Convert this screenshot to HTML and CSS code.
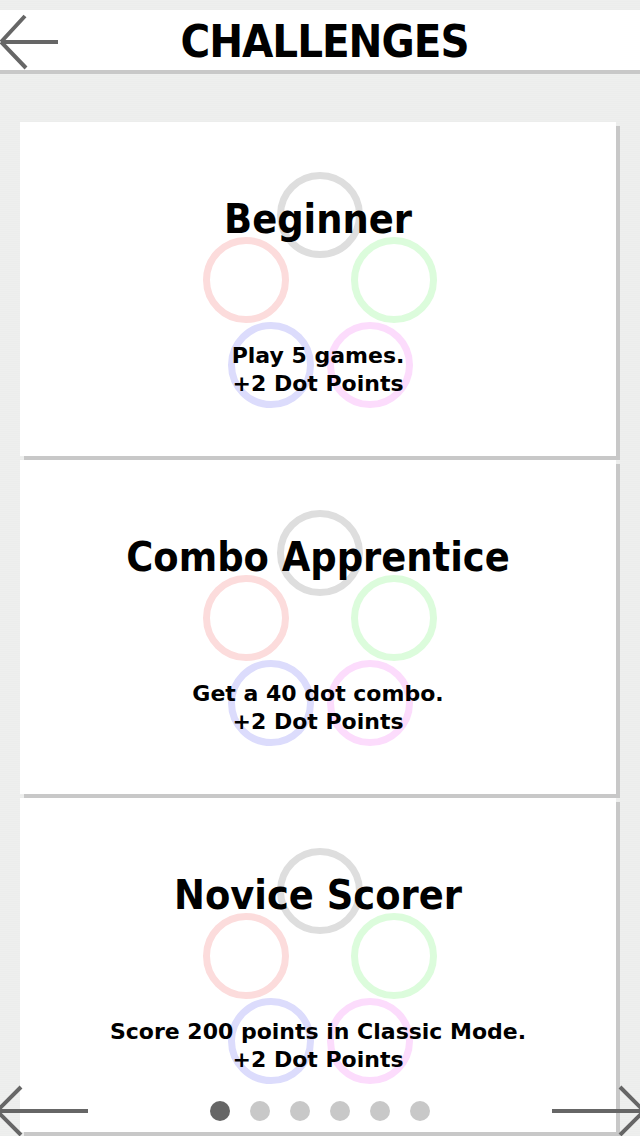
FILE: index.html
```
<!DOCTYPE html>
<html>
<head>
<meta charset="utf-8">
<link rel="stylesheet" href="styles.css">
</head>
<body>
<div class="screen">
  <header class="topbar">
    <svg class="back" width="60" height="60" viewBox="0 0 60 60"><path d="M1 32 L25 6 M1 32 L26 58 M1 32 H58" fill="none" stroke="#666" stroke-width="4"/></svg>
    <h1 class="title">CHALLENGES</h1>
  </header>
  <main class="list">
    <section class="card">
      <div class="rings"><span class="ring r-gray"></span><span class="ring r-red"></span><span class="ring r-green"></span><span class="ring r-blue"></span><span class="ring r-pink"></span></div>
      <h2 class="name">Beginner</h2>
      <p class="desc">Play 5 games.<br>+2 Dot Points</p>
    </section>
    <section class="card">
      <div class="rings"><span class="ring r-gray"></span><span class="ring r-red"></span><span class="ring r-green"></span><span class="ring r-blue"></span><span class="ring r-pink"></span></div>
      <h2 class="name">Combo Apprentice</h2>
      <p class="desc">Get a 40 dot combo.<br>+2 Dot Points</p>
    </section>
    <section class="card">
      <div class="rings"><span class="ring r-gray"></span><span class="ring r-red"></span><span class="ring r-green"></span><span class="ring r-blue"></span><span class="ring r-pink"></span></div>
      <h2 class="name">Novice Scorer</h2>
      <p class="desc">Score 200 points in Classic Mode.<br>+2 Dot Points</p>
    </section>
  </main>
  <nav class="pager">
    <svg class="arrow arrow-left" width="92" height="52" viewBox="-4 0 92 52"><path d="M-3 26 L21 2 M-3 26 L21 50 M-3 26 H88" fill="none" stroke="#666" stroke-width="4"/></svg>
    <div class="dots"><span class="dot on"></span><span class="dot"></span><span class="dot"></span><span class="dot"></span><span class="dot"></span><span class="dot"></span></div>
    <svg class="arrow arrow-right" width="92" height="52" viewBox="0 0 92 52"><path d="M92 26 L68 2 M92 26 L68 50 M92 26 H0" fill="none" stroke="#666" stroke-width="4"/></svg>
  </nav>
</div>
</body>
</html>
```
FILE: styles.css
```
html, body {
  margin: 0;
  padding: 0;
}
body {
  width: 640px;
  height: 1136px;
  overflow: hidden;
  background: repeating-linear-gradient(to bottom, #eeefee 0, #eeefee 1px, #ecedec 1px, #ecedec 2px);
  font-family: "DejaVu Sans Condensed", "DejaVu Sans", sans-serif;
  color: #000;
}
.screen {
  position: relative;
  width: 640px;
  height: 1136px;
  padding-top: 10px;
  box-sizing: border-box;
}
.topbar {
  position: relative;
  height: 57px;
  padding-top: 3px;
  background: #fff;
  border-bottom: 4px solid #c8c8c8;
  display: flex;
  justify-content: center;
}
.back {
  position: absolute;
  left: 0;
  top: 0;
}
.title {
  margin: 0 0 0 9px;
  font-size: 45px;
  line-height: 57px;
  font-weight: bold;
  letter-spacing: -1px;
}
.list {
  padding: 48px 0 0 20px;
  display: flex;
  flex-direction: column;
  gap: 4px;
}
.card {
  position: relative;
  width: 596px;
  height: 334px;
  background: #fff;
  box-shadow: 4px 4px 0 #c8c8c8;
  display: flex;
  flex-direction: column;
  align-items: center;
  padding-top: 73px;
  box-sizing: border-box;
}
.rings {
  position: absolute;
  inset: 0;
}
.ring {
  position: absolute;
  width: 86px;
  height: 86px;
  margin: -43px 0 0 -43px;
  box-sizing: border-box;
  border-radius: 50%;
  border: 7px solid;
}
.r-gray { left: 300px; top: 93px; border-color: #dedede; }
.r-red { left: 226px; top: 158px; border-color: #fcdcdc; }
.r-green { left: 374px; top: 158px; border-color: #dcfcdc; }
.r-blue { left: 251px; top: 243px; border-color: #dcdcfc; }
.r-pink { left: 350px; top: 243px; border-color: #fcdcfc; }
.name {
  position: relative;
  margin: 0;
  font-size: 41px;
  line-height: 48px;
  font-weight: bold;
  white-space: nowrap;
}
.desc {
  position: relative;
  margin: 99px 0 0;
  font-family: "DejaVu Sans", sans-serif;
  font-size: 22px;
  line-height: 28px;
  font-weight: bold;
  text-align: center;
  white-space: nowrap;
}
.pager {
  position: absolute;
  left: 0;
  right: 0;
  top: 1085px;
  height: 52px;
  display: flex;
  justify-content: center;
  align-items: center;
}
.arrow {
  position: absolute;
  top: 0;
}
.arrow-left {
  left: -4px;
}
.arrow-right {
  right: -4px;
}
.dots {
  display: flex;
  gap: 20px;
}
.dot {
  width: 20px;
  height: 20px;
  border-radius: 50%;
  background: #c8c8c8;
}
.dot.on {
  background: #666;
}
```
